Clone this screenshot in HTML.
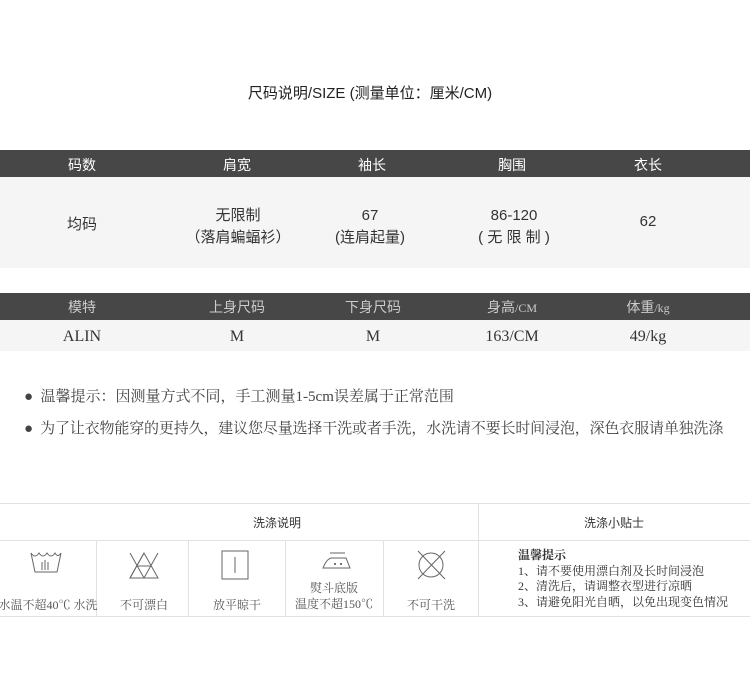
<!DOCTYPE html>
<html><head><meta charset="utf-8"><style>
body{margin:0;width:750px;height:698px;background:#fff;position:relative;overflow:hidden;font-family:"Liberation Sans","Noto Sans CJK SC",sans-serif;color:#333}
.a{position:absolute}
.c{position:absolute;transform:translateX(-50%);white-space:nowrap;text-align:center}
.bar{position:absolute;left:0;width:750px;background:#474747}
.w{color:#fff;font-size:14px}
.s{font-family:"Liberation Serif","Noto Serif CJK SC",serif}
.vl{position:absolute;width:1px;background:#e2e2e2}
.hl{position:absolute;height:1px;background:#e2e2e2}
</style></head><body>
<div class="c" style="left:370px;top:82px;font-size:15px;color:#222">尺码说明/SIZE (测量单位：厘米/CM)</div>

<div class="bar" style="top:150px;height:27px"></div>
<div class="a" style="left:0;top:177px;width:750px;height:91px;background:#f5f5f5"></div>
<div class="c w" style="left:82px;top:155px">码数</div>
<div class="c w" style="left:237px;top:155px">肩宽</div>
<div class="c w" style="left:372px;top:155px">袖长</div>
<div class="c w" style="left:512px;top:155px">胸围</div>
<div class="c w" style="left:648px;top:155px">衣长</div>
<div class="c" style="left:82px;top:213px;font-size:15px">均码</div>
<div class="c" style="left:238px;top:205px;font-size:15px;line-height:22px">无限制<br>（落肩蝙蝠衫）</div>
<div class="c" style="left:370px;top:205px;font-size:15px;line-height:22px">67<br>(连肩起量)</div>
<div class="c" style="left:514px;top:205px;font-size:15px;line-height:22px">86-120<br>( 无 限 制 )</div>
<div class="c" style="left:648px;top:213px;font-size:15px">62</div>

<div class="bar" style="top:293px;height:27px"></div>
<div class="a" style="left:0;top:320px;width:750px;height:31px;background:#f5f5f5"></div>
<div class="c w" style="left:82px;top:297px;color:#ccc">模特</div>
<div class="c w" style="left:237px;top:297px;color:#ccc">上身尺码</div>
<div class="c w" style="left:373px;top:297px;color:#ccc">下身尺码</div>
<div class="c w" style="left:512px;top:297px;color:#ccc">身高<span class="s" style="font-size:12px">/CM</span></div>
<div class="c w" style="left:648px;top:297px;color:#ccc">体重<span class="s" style="font-size:12px">/kg</span></div>
<div class="c s" style="left:82px;top:328px;font-size:16px">ALIN</div>
<div class="c s" style="left:237px;top:328px;font-size:16px">M</div>
<div class="c s" style="left:373px;top:328px;font-size:16px">M</div>
<div class="c s" style="left:512px;top:328px;font-size:16px">163/CM</div>
<div class="c s" style="left:648px;top:328px;font-size:16px">49/kg</div>

<div class="a s" style="left:24px;top:385px;font-size:15px;color:#444;white-space:nowrap">●&nbsp; 温馨提示：因测量方式不同，手工测量1-5cm误差属于正常范围</div>
<div class="a s" style="left:24px;top:417px;font-size:15px;color:#444;white-space:nowrap;letter-spacing:-0.15px">●&nbsp; 为了让衣物能穿的更持久，建议您尽量选择干洗或者手洗，水洗请不要长时间浸泡，深色衣服请单独洗涤</div>

<div class="hl" style="left:0;top:503px;width:750px"></div>
<div class="hl" style="left:0;top:540px;width:750px"></div>
<div class="hl" style="left:0;top:616px;width:750px"></div>
<div class="vl" style="left:478px;top:503px;height:113px"></div>
<div class="vl" style="left:96px;top:540px;height:76px"></div>
<div class="vl" style="left:188px;top:540px;height:76px"></div>
<div class="vl" style="left:285px;top:540px;height:76px"></div>
<div class="vl" style="left:383px;top:540px;height:76px"></div>
<div class="c" style="left:277px;top:514px;font-size:12px;color:#333">洗涤说明</div>
<div class="c" style="left:614px;top:514px;font-size:12px;color:#333">洗涤小贴士</div>

<svg class="a" style="left:0;top:540px" width="480" height="76" stroke="#666" fill="none" stroke-width="1">
<path d="M31 13 L35 32 H57 L61 13"/><path d="M31 13 q4 6 8 0 q4 6 8 0 q4 6 8 0 q3 5 6 0"/><path d="M42 22 v8 M45 20 v10 M48 22 v8"/>
<path d="M130 13 L144 38 H130 L144 13 M158 13 L144 38"/><path d="M137 26 L151 26"/><path d="M130 38 H158 L144 13Z"/>
<rect x="222" y="11" width="26" height="28"/><path d="M235 17 v16"/>
<path d="M323 28 h27 l-4 -10 h-14 q-5 0 -9 10z"/><path d="M330 13 h15"/><circle cx="335" cy="24" r=".6"/><circle cx="341" cy="24" r=".6"/>
<circle cx="431" cy="25" r="12"/><path d="M418 11 L445 39 M445 11 L418 39"/>
</svg>
<div class="c s" style="left:48px;top:596px;font-size:12px;color:#555">水温不超40℃ 水洗</div>
<div class="c s" style="left:144px;top:596px;font-size:12px;color:#555">不可漂白</div>
<div class="c s" style="left:237px;top:596px;font-size:12px;color:#555">放平晾干</div>
<div class="c s" style="left:334px;top:580px;font-size:12px;color:#555;line-height:16px">熨斗底版<br>温度不超150℃</div>
<div class="c s" style="left:431px;top:596px;font-size:12px;color:#555">不可干洗</div>
<div class="a s" style="left:518px;top:548px;font-size:12px;line-height:15.5px;color:#333;white-space:nowrap"><b>温馨提示</b><br>1、请不要使用漂白剂及长时间浸泡<br>2、清洗后，请调整衣型进行凉晒<br>3、请避免阳光自晒，以免出现变色情况</div>
</body></html>
